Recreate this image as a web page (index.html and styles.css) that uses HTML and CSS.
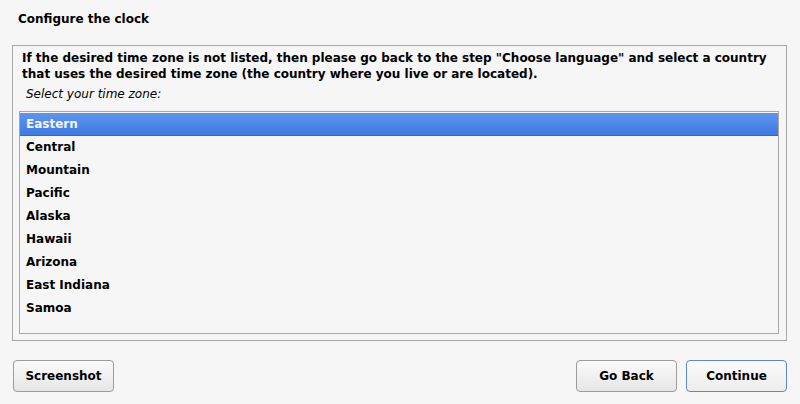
FILE: index.html
```html
<!DOCTYPE html>
<html>
<head>
<meta charset="utf-8">
<link rel="stylesheet" href="styles.css">
</head>
<body>
<div class="page">
  <h1 class="title">Configure the clock</h1>
  <div class="panel">
    <p class="intro">If the desired time zone is not listed, then please go back to the step "Choose language" and select a country that uses the desired time zone (the country where you live or are located).</p>
    <div class="label">Select your time zone:</div>
    <ul class="list">
      <li class="item selected">Eastern</li>
      <li class="item">Central</li>
      <li class="item">Mountain</li>
      <li class="item">Pacific</li>
      <li class="item">Alaska</li>
      <li class="item">Hawaii</li>
      <li class="item">Arizona</li>
      <li class="item">East Indiana</li>
      <li class="item">Samoa</li>
    </ul>
  </div>
  <div class="buttons">
    <button class="btn">Screenshot</button>
    <div class="spacer"></div>
    <button class="btn">Go Back</button>
    <button class="btn primary">Continue</button>
  </div>
</div>
</body>
</html>
```
FILE: styles.css
```css
html, body {
  margin: 0;
  padding: 0;
  background: #f6f6f6;
}
body {
  font-family: "DejaVu Sans", sans-serif;
  font-size: 12px;
  color: #000;
  width: 800px;
  height: 404px;
  overflow: hidden;
}
.page {
  display: flex;
  flex-direction: column;
  padding: 0 13px 0 12px;
}
.title {
  margin: 0;
  padding: 11px 0 0 6px;
  height: 45px;
  flex: none;
  box-sizing: border-box;
  font-size: 12px;
  font-weight: bold;
  line-height: 16px;
}
.panel {
  border: 1px solid #a8a8a8;
  height: 296px;
  box-sizing: border-box;
  padding: 4px 7px 6px 6px;
  display: flex;
  flex-direction: column;
}
.intro {
  margin: 0 0 0 3px;
  font-weight: bold;
  line-height: 16px;
}
.label {
  font-style: italic;
  margin: 4px 0 0 7px;
  line-height: 16px;
  height: 25px;
}
.list {
  list-style: none;
  margin: 0;
  padding: 1px 0 0;
  border: 1px solid #a8a8a8;
  flex: 1;
  background: #f6f6f6;
}
.item {
  font-weight: bold;
  height: 23px;
  line-height: 23px;
  padding-left: 6px;
}
.item.selected {
  color: #f2f6ff;
  background: linear-gradient(#5f95ec, #3f7ae4);
  border-bottom: 1px solid #3566c0;
  box-sizing: border-box;
  line-height: 22px;
}
.buttons {
  display: flex;
  margin-top: 19px;
  gap: 9px;
}
.spacer {
  flex: 1;
}
.btn {
  font-family: "DejaVu Sans", sans-serif;
  font-size: 12px;
  font-weight: bold;
  width: 101px;
  height: 32px;
  border: 1px solid #9c9c9c;
  border-radius: 4px;
  background: linear-gradient(#fafafa, #e6e6e6);
  color: #000;
  padding: 0;
}
.btn:first-child {
  margin-left: 1px;
}
.btn.primary {
  border-color: #5d89cc;
  background: linear-gradient(#fbfbfb, #ececec);
}
```
